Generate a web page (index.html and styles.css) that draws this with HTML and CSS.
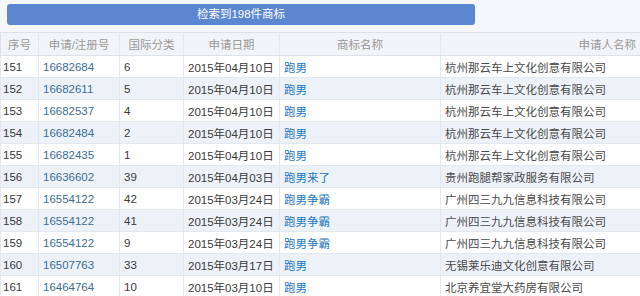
FILE: index.html
```html
<!DOCTYPE html>
<html lang="zh-CN">
<head>
<meta charset="utf-8">
<link rel="stylesheet" href="styles.css">
</head>
<body>
<div class="page">
  <div class="top">
    <div class="bar">检索到198件商标</div>
  </div>
  <table class="grid">
    <colgroup>
      <col class="c1"><col class="c2"><col class="c3"><col class="c4"><col class="c5"><col class="c6">
    </colgroup>
    <thead>
      <tr><th>序号</th><th>申请/注册号</th><th>国际分类</th><th>申请日期</th><th>商标名称</th><th class="right">申请人名称</th></tr>
    </thead>
    <tbody>
      <tr><td>151</td><td class="reg">16682684</td><td>6</td><td>2015年04月10日</td><td class="tm">跑男</td><td class="who">杭州那云车上文化创意有限公司</td></tr>
      <tr><td>152</td><td class="reg">16682611</td><td>5</td><td>2015年04月10日</td><td class="tm">跑男</td><td class="who">杭州那云车上文化创意有限公司</td></tr>
      <tr><td>153</td><td class="reg">16682537</td><td>4</td><td>2015年04月10日</td><td class="tm">跑男</td><td class="who">杭州那云车上文化创意有限公司</td></tr>
      <tr><td>154</td><td class="reg">16682484</td><td>2</td><td>2015年04月10日</td><td class="tm">跑男</td><td class="who">杭州那云车上文化创意有限公司</td></tr>
      <tr><td>155</td><td class="reg">16682435</td><td>1</td><td>2015年04月10日</td><td class="tm">跑男</td><td class="who">杭州那云车上文化创意有限公司</td></tr>
      <tr><td>156</td><td class="reg">16636602</td><td>39</td><td>2015年04月03日</td><td class="tm">跑男来了</td><td class="who">贵州跑腿帮家政服务有限公司</td></tr>
      <tr><td>157</td><td class="reg">16554122</td><td>42</td><td>2015年03月24日</td><td class="tm">跑男争霸</td><td class="who">广州四三九九信息科技有限公司</td></tr>
      <tr><td>158</td><td class="reg">16554122</td><td>41</td><td>2015年03月24日</td><td class="tm">跑男争霸</td><td class="who">广州四三九九信息科技有限公司</td></tr>
      <tr><td>159</td><td class="reg">16554122</td><td>9</td><td>2015年03月24日</td><td class="tm">跑男争霸</td><td class="who">广州四三九九信息科技有限公司</td></tr>
      <tr><td>160</td><td class="reg">16507763</td><td>33</td><td>2015年03月17日</td><td class="tm">跑男</td><td class="who">无锡莱乐迪文化创意有限公司</td></tr>
      <tr><td>161</td><td class="reg">16464764</td><td>10</td><td>2015年03月10日</td><td class="tm">跑男</td><td class="who">北京养宜堂大药房有限公司</td></tr>
    </tbody>
  </table>
</div>
</body>
</html>
```
FILE: styles.css
```css
html, body {
  margin: 0;
  padding: 0;
  background: #f4f6f9;
}
.page {
  width: 640px;
  height: 296px;
  overflow: hidden;
  font-family: "Liberation Sans", "Noto Sans CJK SC", sans-serif;
  font-size: 11.5px;
  color: #3a3a3a;
}
.top {
  padding: 4px 0 0 7px;
  height: 28px;
  box-sizing: border-box;
}
.bar {
  width: 468px;
  height: 21px;
  line-height: 21px;
  background: #5b87d1;
  border-radius: 3px;
  color: #fff;
  text-align: center;
}
.grid {
  border-collapse: collapse;
  table-layout: fixed;
  width: 640px;
  margin-top: 4px;
}
.c1 { width: 38px; }
.c2 { width: 81px; }
.c3 { width: 64px; }
.c4 { width: 96px; }
.c5 { width: 161px; }
.c6 { width: 200px; }
th {
  height: 22px;
  background: #f2f4f7;
  color: #999;
  font-weight: normal;
  text-align: center;
  border: 1px solid #dde2e9;
  border-right-color: #e4e8ee;
  padding: 0;
  white-space: nowrap;
}
th.right {
  text-align: right;
  padding-right: 4px;
}
td {
  height: 21px;
  padding: 0 0 0 4px;
  border: 1px solid #e3e8ef;
  white-space: nowrap;
  overflow: hidden;
}
td:first-child { padding-left: 2px; }
tbody tr:nth-child(odd) td { background: #ffffff; }
tbody tr:nth-child(even) td { background: #edf2f9; }
.reg { color: #3b6d96; }
.tm { color: #2278c4; }
.who { color: #4a4a4a; }
```
